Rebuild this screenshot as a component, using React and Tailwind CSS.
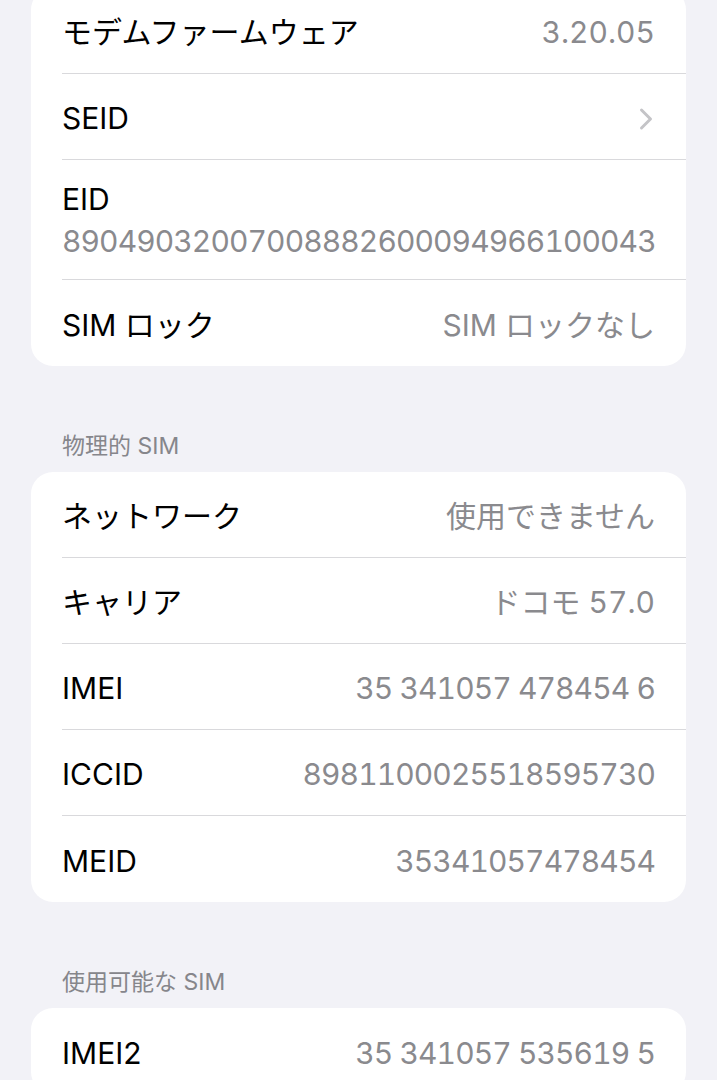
import { ChevronRight } from 'lucide-react'

const font = { fontFamily: 'Inter, "Noto Sans CJK JP", sans-serif' }

function Row({ label, value, chevron, num, last }) {
  return (
    <div className={`ml-[31px] flex h-[86px] items-center justify-between pt-[4px] pr-[31px] ${last ? '' : 'border-b border-[#d9d9dc]'}`}>
      <span className="text-[30px] text-black">{label}</span>
      {chevron ? (
        <ChevronRight className="mr-[-9px] h-[36px] w-[36px] text-[#c4c4c7]" strokeWidth={2} />
      ) : (
        <span className={`text-[30px] tabular-nums text-[#8a8a8e] ${num ? 'tracking-[-0.9px]' : ''}`}>{value}</span>
      )}
    </div>
  )
}

function Header({ children }) {
  return (
    <div className="mt-[64px] mb-[12px] flex h-[30px] items-center pt-[2px] pl-[31px] text-[23px] text-[#86868b]">
      {children}
    </div>
  )
}

export default function App() {
  return (
    <div className="min-h-screen overflow-hidden bg-[#f2f2f7] px-[31px]" style={font}>
      <div className="-mt-[12px] overflow-hidden rounded-[22px] bg-white">
        <Row label="モデムファームウェア" value="3.20.05" />
        <Row label="SEID" chevron />
        <div className="ml-[31px] flex h-[120px] flex-col justify-center border-b border-[#d9d9dc] pt-[3px] pr-[31px]">
          <span className="text-[30px] leading-[40px] text-black">EID</span>
          <span className="text-[30px] leading-[44px] tracking-[-0.9px] tabular-nums text-[#8a8a8e]">89049032007008882600094966100043</span>
        </div>
        <Row label="SIM ロック" value="SIM ロックなし" last />
      </div>

      <Header>物理的 SIM</Header>
      <div className="overflow-hidden rounded-[22px] bg-white">
        <Row label="ネットワーク" value="使用できません" />
        <Row label="キャリア" value="ドコモ 57.0" />
        <Row label="IMEI" value="35 341057 478454 6" num />
        <Row label="ICCID" value="8981100025518595730" num />
        <Row label="MEID" value="35341057478454" num last />
      </div>

      <Header>使用可能な SIM</Header>
      <div className="overflow-hidden rounded-[22px] bg-white">
        <Row label="IMEI2" value="35 341057 535619 5" num last />
      </div>
    </div>
  )
}
